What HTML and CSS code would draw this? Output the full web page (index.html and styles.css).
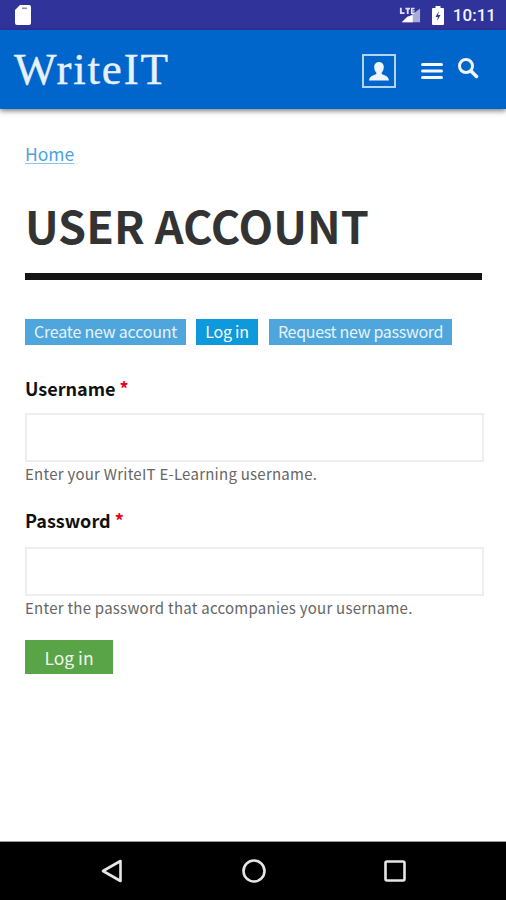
FILE: index.html
```html
<!DOCTYPE html>
<html lang="en">
<head>
<meta charset="utf-8">
<title>WriteIT</title>
<link rel="stylesheet" href="styles.css">
</head>
<body>
<div class="screen">
  <div class="statusbar">
    <svg class="sd-icon" viewBox="0 0 18 22" width="18" height="22"><path d="M6 1h9a2 2 0 0 1 2 2v16a2 2 0 0 1-2 2H3a2 2 0 0 1-2-2V6z" fill="#fff"/><path d="M8 3.5h5v1.6H8z" fill="#8a8fc0"/></svg>
    <div class="status-right">
      <svg class="signal-icon" viewBox="0 0 24 20" width="22" height="20"><path d="M23 3v15H3z" fill="#a9add6"/><path d="M15 10v8H3l6-6z" fill="#fff"/><path d="M1 2h2v5h3v2H1zM7 2h5v2h-1.500v5h-2V4H7zM13 2h4v1.600h-2.300v1.200H17v1.400h-2.300v1.200H17V9h-4z" fill="#dfe3ff"/></svg>
      <svg class="battery-icon" viewBox="0 0 12 20" width="12" height="20"><path d="M3.500 1h5v2H11a1 1 0 0 1 1 1v15a1 1 0 0 1-1 1H1a1 1 0 0 1-1-1V4a1 1 0 0 1 1-1h2.500z" fill="#fff"/><path d="M7 6 3.500 12H6l-1 4 3.500-6H6z" fill="#303399"/></svg>
      <span class="clock">10:11</span>
    </div>
  </div>
  <header class="appbar">
    <span class="logo">WriteIT</span>
    <div class="appbar-icons">
      <svg class="user-icon" viewBox="0 0 34 34" width="34" height="34"><rect x="1" y="1" width="32" height="32" fill="none" stroke="#b5d3f2" stroke-width="2"/><path d="M17 8c3 0 4.800 2.200 4.800 5.200 0 2.200-.8 4-2.100 5.300v1.500c2.700 1.200 6.800 2 7.300 6.500H7c.5-4.500 4.600-5.300 7.300-6.500v-1.500c-1.300-1.300-2.100-3.100-2.100-5.300C12.200 10.200 14 8 17 8z" fill="#eef5fc"/></svg>
      <svg class="menu-icon" viewBox="0 0 22 18" width="22" height="18"><path d="M1.500 2.500h19M1.500 9h19M1.500 15.500h19" stroke="#f4f8fc" stroke-width="3" stroke-linecap="round"/></svg>
      <svg class="search-icon" viewBox="0 0 22 22" width="22" height="22"><circle cx="9" cy="9" r="6.500" fill="none" stroke="#f0f6fc" stroke-width="3"/><path d="m14 14 5.500 5.500" stroke="#f0f6fc" stroke-width="3.500" stroke-linecap="round"/></svg>
    </div>
  </header>
  <main class="content">
    <a class="breadcrumb" href="#">Home</a>
    <h1 class="title">USER ACCOUNT</h1>
    <nav class="tabs">
      <a class="tab" href="#">Create new account</a>
      <a class="tab tab-active" href="#">Log in</a>
      <a class="tab tab-last" href="#">Request new password</a>
    </nav>
    <form class="form">
      <div class="field">
        <label class="label">Username <span class="req">*</span></label>
        <input class="input" type="text">
        <div class="help">Enter your WriteIT E-Learning username.</div>
      </div>
      <div class="field field-second">
        <label class="label">Password <span class="req">*</span></label>
        <input class="input" type="password">
        <div class="help">Enter the password that accompanies your username.</div>
      </div>
      <button class="submit" type="button">Log in</button>
    </form>
  </main>
  <footer class="navbar">
    <svg viewBox="0 0 24 26" width="24" height="26"><path d="M20.500 3v20L3 13z" fill="none" stroke="#e6e6e6" stroke-width="2.600" stroke-linejoin="round"/></svg>
    <svg viewBox="0 0 24 24" width="24" height="24"><circle cx="12" cy="12" r="10.500" fill="none" stroke="#e6e6e6" stroke-width="2.600"/></svg>
    <svg viewBox="0 0 22 22" width="22" height="22"><rect x="1.500" y="1.500" width="19" height="19" rx="1.500" fill="none" stroke="#e6e6e6" stroke-width="2.600"/></svg>
  </footer>
</div>
</body>
</html>
```
FILE: styles.css
```css
* { box-sizing: border-box; }
html, body { margin: 0; padding: 0; background: #fff; }
.screen {
  width: 506px; height: 900px; display: flex; flex-direction: column; overflow: hidden;
  font-family: "Noto Sans CJK JP", "Noto Sans", sans-serif;
}
.statusbar {
  height: 30px; flex: none; background: #303399; display: flex; align-items: center;
  justify-content: space-between; padding: 0 10px 0 14px;
}
.sd-icon { display: block; }
.status-right { display: flex; align-items: center; }
.signal-icon { margin-right: 11px; }
.battery-icon { margin-right: 9px; }
.clock { color: #f4f4fb; font: 500 17px/30px Roboto, sans-serif; }
.appbar {
  height: 79px; flex: none; background: #0066cc; display: flex; align-items: center;
  justify-content: space-between; padding: 0 27px 0 14px;
  box-shadow: 0 2px 5px rgba(0,0,0,.5); position: relative;
}
.logo {
  font-family: "Liberation Serif", serif; font-size: 45px; line-height: 1; color: #e8f1fb;
  letter-spacing: 1.800px; margin-top: 0; -webkit-text-stroke: .4px #e8f1fb;
}
.appbar-icons { display: flex; align-items: center; }
.user-icon { margin-right: 25px; margin-top: 3px; }
.menu-icon { margin-right: 14px; margin-top: 3px; }
.search-icon { margin-top: -3px; }
.content { flex: 1; padding: 32px 22px 0 25px; }
.breadcrumb {
  display: block; width: max-content; font-size: 17.500px; line-height: 26px; color: #4aa3df;
  text-decoration: underline; text-decoration-color: #8cc5ea; text-underline-offset: 2px;
}
.title {
  margin: 23px 0 0; padding-bottom: 13px; border-bottom: 7px solid #141414;
  font-size: 45px; line-height: 70px; font-weight: 700; color: #333;
  width: 457px; white-space: nowrap;
}
.tabs { display: flex; margin-top: 39px; }
.tab {
  display: block; height: 26px; padding: 0 9px; font-size: 16px; line-height: 25px; white-space: nowrap;
  letter-spacing: -.2px; color: #e6f3fb; background: #4ea6dc; text-decoration: none; margin-right: 10px;
}
.tab-active { background: #0d99dc; color: #fff; margin-right: 11px; }
.tab-last { margin-right: 0; letter-spacing: -.3px; }
.form { display: block; margin-top: 29px; }
.field { margin-bottom: 20px; }
.label { display: block; font-size: 18px; line-height: 28px; font-weight: 700; color: #111; }
.req { color: #e8001c; }
.input {
  display: block; width: 459px; height: 49px; margin-top: 11px; border: 2px solid #eeeeee;
  background: #fff; outline: none; padding: 0;
}
.field-second .input { margin-top: 13px; }
.help { font-size: 15px; line-height: 24px; color: #666; letter-spacing: .25px; white-space: nowrap; }
.submit {
  display: block; width: 88px; height: 34px; border: 0; padding: 0; background: #5aa448;
  color: #f0f7ee; font-family: inherit; font-size: 17.500px; line-height: 33px;
}
.navbar {
  height: 59px; flex: none; background: #000; display: flex; align-items: center;
  border-top: 1px solid #999; padding: 0 100px; justify-content: space-between;
}
```
